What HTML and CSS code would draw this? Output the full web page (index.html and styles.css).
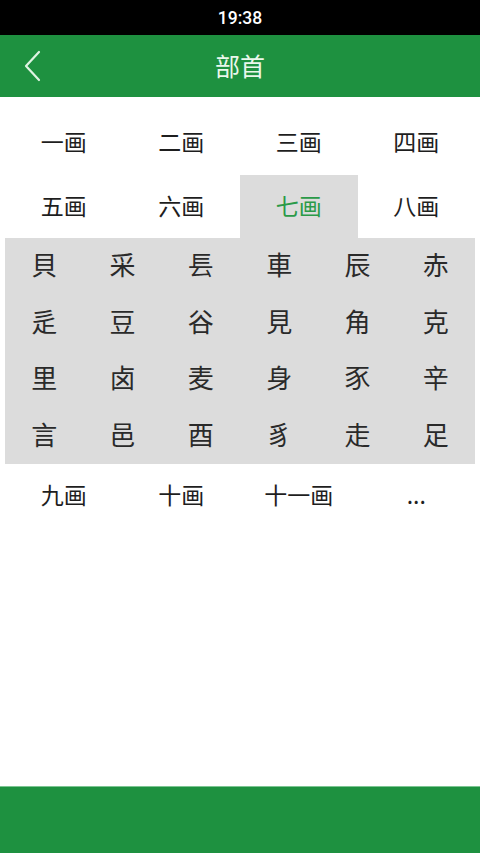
FILE: index.html
```html
<!DOCTYPE html>
<html lang="zh">
<head>
<meta charset="utf-8">
<link rel="stylesheet" href="styles.css">
</head>
<body>
<div class="screen">
  <div class="status">19:38</div>
  <div class="appbar">
    <svg class="back" width="20" height="32" viewBox="0 0 20 32"><path d="M16 2 L3 16 L16 30" fill="none" stroke="#dff3e2" stroke-width="2.2" stroke-linecap="round" stroke-linejoin="round"/></svg>
    <div class="title">部首</div>
  </div>
  <div class="main">
    <div class="tabs">
      <div class="tab">一画</div>
      <div class="tab">二画</div>
      <div class="tab">三画</div>
      <div class="tab">四画</div>
      <div class="tab">五画</div>
      <div class="tab">六画</div>
      <div class="tab active">七画</div>
      <div class="tab">八画</div>
      <div class="panel">
        <div class="ch">貝</div><div class="ch">采</div><div class="ch">镸</div><div class="ch">車</div><div class="ch">辰</div><div class="ch">赤</div>
        <div class="ch">辵</div><div class="ch">豆</div><div class="ch">谷</div><div class="ch">見</div><div class="ch">角</div><div class="ch">克</div>
        <div class="ch">里</div><div class="ch">卤</div><div class="ch">麦</div><div class="ch">身</div><div class="ch">豕</div><div class="ch">辛</div>
        <div class="ch">言</div><div class="ch">邑</div><div class="ch">酉</div><div class="ch">豸</div><div class="ch">走</div><div class="ch">足</div>
      </div>
      <div class="tab">九画</div>
      <div class="tab">十画</div>
      <div class="tab">十一画</div>
      <div class="tab">...</div>
    </div>
  </div>
  <div class="footer"></div>
</div>
</body>
</html>
```
FILE: styles.css
```css
* { box-sizing: border-box; }
html, body { margin: 0; padding: 0; background: #fff; }
body { font-family: "Noto Sans CJK SC", "Noto Sans", sans-serif; }
.screen { width: 480px; height: 853px; display: flex; flex-direction: column; }
.status {
  height: 35px; background: #000; color: #fff;
  font-family: "Roboto", "Liberation Sans", sans-serif; font-weight: 500;
  font-size: 17.5px; display: flex; align-items: center; justify-content: center;
}
.appbar {
  height: 62px; background: #1e9140; position: relative;
  display: flex; align-items: center; justify-content: center;
}
.back { position: absolute; left: 23px; top: 15px; }
.title { color: #eaf7ec; font-size: 25px; line-height: 1; padding-bottom: 2px; }
.main { flex: 1; padding: 14px 5px 0; }
.tabs { display: grid; grid-template-columns: repeat(4, 1fr); }
.tab {
  height: 63.5px; display: flex; align-items: center; justify-content: center;
  font-size: 23px; line-height: 1; color: #1e1e1e; padding-bottom: 2px;
}
.tab.active { background: #dcdcdc; color: #2a9a48; }
.panel {
  grid-column: 1 / -1; background: #dcdcdc;
  display: grid; grid-template-columns: repeat(6, 1fr);
  grid-auto-rows: 56.5px;
}
.ch {
  display: flex; align-items: center; justify-content: center;
  font-size: 26px; line-height: 1; color: #2a2a2a; padding-bottom: 4px;
}
.footer { height: 67px; background: #1e9140; border-top: 1px solid #7cc592; }
```
